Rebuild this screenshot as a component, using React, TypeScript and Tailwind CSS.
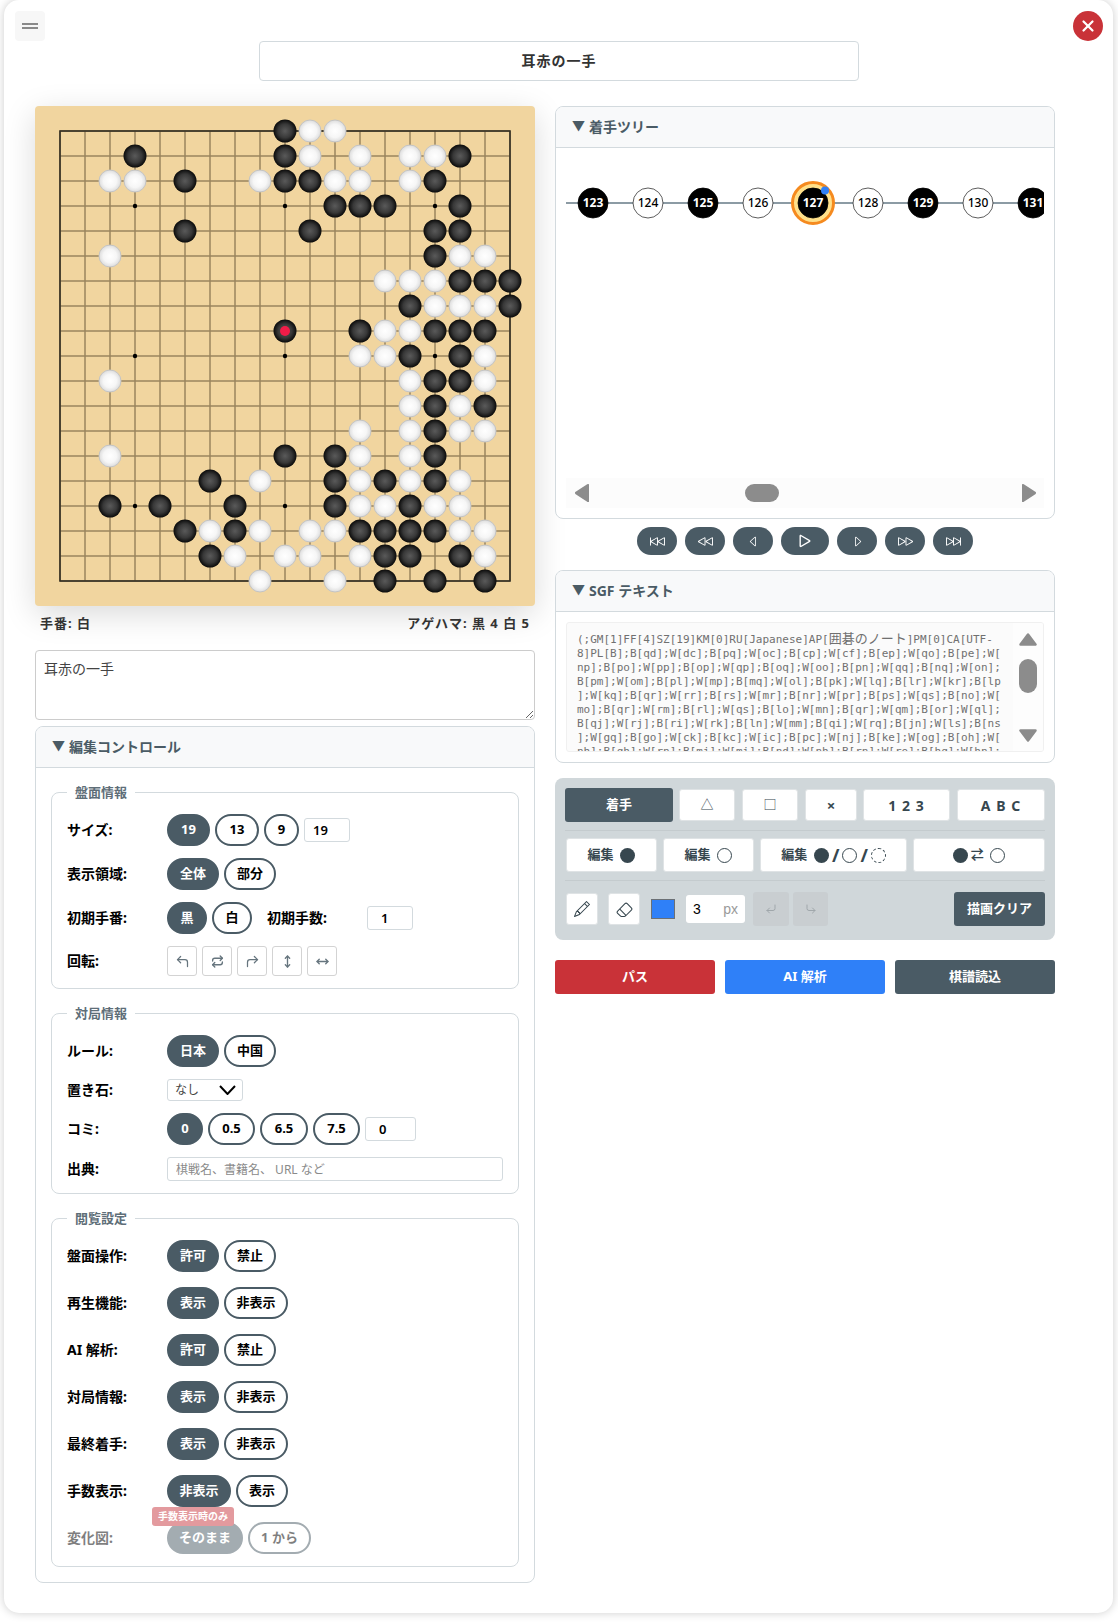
import React from 'react';
import { X, CornerUpLeft, CornerUpRight, Repeat, MoveVertical, MoveHorizontal, CornerDownLeft, CornerDownRight } from 'lucide-react';
import { BsSkipBackward, BsRewind, BsCaretLeft, BsPlay, BsCaretRight, BsFastForward, BsSkipForward, BsPencil, BsEraser } from 'react-icons/bs';

const BOARD = [
  '.........BWW.......',
  '...B.....BW.W.WWB..',
  '..WW.B..WBBWW.WB...',
  '...........BBB..B..',
  '.....B....B....BB..',
  '..W............BWW.',
  '.............WWWBBB',
  '..............BWWWB',
  '.........B..BWWBBB.',
  '............WWB.BW.',
  '..W...........WBBW.',
  '..............WBWB.',
  '............W.WBWW.',
  '..W......B.BW.WB...',
  '......B.W..BWBWBW..',
  '..B.B..B...BWWBWW..',
  '.....BWBW.WWBBBBWW.',
  '......BW.WW.WBB.BW.',
  '........W..W.B.B.B.',
];

const STARS = [3, 9, 15];
const SGF = [
  '(;GM[1]FF[4]SZ[19]KM[0]RU[Japanese]AP[',
  '8]PL[B];B[qd];W[dc];B[pq];W[oc];B[cp];W[cf];B[ep];W[qo];B[pe];W[',
  'np];B[po];W[pp];B[op];W[qp];B[oq];W[oo];B[pn];W[qq];B[nq];W[on];',
  'B[pm];W[om];B[pl];W[mp];B[mq];W[ol];B[pk];W[lq];B[lr];W[kr];B[lp',
  '];W[kq];B[qr];W[rr];B[rs];W[mr];B[nr];W[pr];B[ps];W[qs];B[no];W[',
  'mo];B[qr];W[rm];B[rl];W[qs];B[lo];W[mn];B[qr];W[qm];B[or];W[ql];',
  'B[qj];W[rj];B[ri];W[rk];B[ln];W[mm];B[qi];W[rq];B[jn];W[ls];B[ns',
  '];W[gq];B[go];W[ck];B[kc];W[ic];B[pc];W[nj];B[ke];W[og];B[oh];W[',
  'nh];B[qh];W[rn];B[mj];W[mi];B[nd];W[nh];B[rn];W[ro];B[hq];W[hn];',
];

function Board() {
  const lines = Array.from({ length: 19 }, (_, i) => 25 + i * 25);
  return (
    <svg width="500" height="500" viewBox="0 0 500 500" className="block">
      <defs>
        <radialGradient id="blackStone" cx="50%" cy="50%" r="50%">
          <stop offset="0%" stopColor="#5a5a5a" />
          <stop offset="60%" stopColor="#383838" />
          <stop offset="100%" stopColor="#0a0a0a" />
        </radialGradient>
        <radialGradient id="whiteStone" cx="50%" cy="50%" r="50%">
          <stop offset="0%" stopColor="#ffffff" />
          <stop offset="60%" stopColor="#f6f6f6" />
          <stop offset="100%" stopColor="#dcdcdc" />
        </radialGradient>
      </defs>
      {lines.map((p) => (
        <g key={p} stroke="#9a845e" strokeWidth="1.5">
          <line x1={p} y1="25" x2={p} y2="475" />
          <line x1="25" y1={p} x2="475" y2={p} />
        </g>
      ))}
      <rect x="25" y="25" width="450" height="450" fill="none" stroke="#332e22" strokeWidth="1.6" />
      {STARS.map((r) =>
        STARS.map((c) => <circle key={`${r}-${c}`} cx={25 + c * 25} cy={25 + r * 25} r="2.2" fill="#000" />),
      )}
      {BOARD.map((row, r) =>
        row.split('').map((cell, c) =>
          cell === '.' ? null : (
            <circle
              key={`s${r}-${c}`}
              cx={25 + c * 25}
              cy={25 + r * 25}
              r={cell === 'B' ? 11.5 : 11}
              fill={cell === 'B' ? 'url(#blackStone)' : 'url(#whiteStone)'}
              stroke={cell === 'B' ? 'none' : '#c4c4c4'}
              strokeWidth="1"
            />
          ),
        ),
      )}
      <circle cx={250} cy={225} r="5" fill="#f01c48" />
    </svg>
  );
}

function Panel({ title, children, className = '' }: { title: string; children: React.ReactNode; className?: string }) {
  return (
    <div className={`border border-[#d3dade] rounded-[8px] bg-white overflow-hidden flex flex-col ${className}`}>
      <div className="h-[41px] shrink-0 pb-[2px] bg-[#f8f9fa] border-b border-[#d3dade] flex items-center pl-[16px] text-[14px] font-bold text-[#4a5b65]">
        <span className="text-[13px] mr-[4px]">▼</span>
        {title}
      </div>
      {children}
    </div>
  );
}

function Pill({ children, active, w }: { children: React.ReactNode; active?: boolean; w: string }) {
  return (
    <div
      className={`h-[32px] rounded-full border-2 border-[#4a5b65] flex items-center justify-center text-[13px] font-bold ${w} ${
        active ? 'bg-[#4a5b65] text-white' : 'bg-white text-black'
      }`}
    >
      {children}
    </div>
  );
}

function Row({ label, children, className = '' }: { label: string; children: React.ReactNode; className?: string }) {
  return (
    <div className={`flex items-center ${className}`}>
      <div className="w-[100px] shrink-0 pb-[1px] text-[14px] font-bold text-black">{label}</div>
      <div className="flex items-center gap-[5px]">{children}</div>
    </div>
  );
}

function Group({ title, children, gap, top }: { title: string; children: React.ReactNode; gap: string; top: string }) {
  return (
    <fieldset className={`border border-[#d3dade] rounded-[8px] px-[15px] pt-[13px] pb-[12px] ${top}`}>
      <legend className="px-[8px] h-[18px] leading-[18px] text-[13px] font-bold text-[#5e6e78]">{title}</legend>
      <div className={`flex flex-col ${gap}`}>{children}</div>
    </fieldset>
  );
}

function TextBox({ value, w, pad }: { value: string; w: string; pad: string }) {
  return (
    <input
      readOnly
      value={value}
      className={`h-[24px] ${w} ${pad} border border-[#d3dade] rounded-[3px] text-[13px] font-semibold text-black outline-none`}
    />
  );
}

function RotateButton({ children }: { children: React.ReactNode }) {
  return (
    <div className="w-[30px] h-[30px] border border-[#d3d3d3] rounded-[3px] flex items-center justify-center text-[#66757e]">
      {children}
    </div>
  );
}

function Tool({ children, w, active }: { children: React.ReactNode; w: string; active?: boolean }) {
  return (
    <div
      className={`${w} flex items-center justify-center rounded-[3px] text-[13px] font-bold ${
        active ? 'h-[34px] bg-[#4a5b65] text-white' : 'h-[32px] bg-white text-[#37474f] border border-[#dfe3e5]'
      }`}
    >
      {children}
    </div>
  );
}

function Dot({ kind }: { kind: 'b' | 'w' | 'd' }) {
  if (kind === 'b') return <span className="inline-block w-[15px] h-[15px] rounded-full bg-[#37474f]" />;
  if (kind === 'w') return <span className="inline-block w-[15px] h-[15px] rounded-full bg-white border border-[#37474f]" />;
  return <span className="inline-block w-[15px] h-[15px] rounded-full bg-white border border-dashed border-[#37474f]" />;
}

const TREE = [123, 124, 125, 126, 127, 128, 129, 130, 131];

function MoveTree() {
  return (
    <svg width="478" height="120" className="block">
      <line x1="0" y1="45" x2="478" y2="45" stroke="#8c9ba4" strokeWidth="2" />
      {TREE.map((n, i) => {
        const x = 27 + i * 55;
        const black = n % 2 === 1;
        return (
          <g key={n}>
            {n === 127 && <circle cx={x} cy="45" r="20.5" fill="#ffe08a" stroke="#f58a1f" strokeWidth="3" />}
            <circle cx={x} cy="45" r="15" fill={black ? '#000' : '#fff'} stroke={black ? '#000' : '#333'} strokeWidth="0.8" />
            <text x={x} y="49" textAnchor="middle" fontSize="12" fontWeight={black ? 700 : 500} fill={black ? '#fff' : '#000'}>
              {n}
            </text>
            {n === 127 && <circle cx={x + 12} cy="32.5" r="4" fill="#2f80f8" />}
          </g>
        );
      })}
    </svg>
  );
}

function PlayButton({ children, wide }: { children: React.ReactNode; wide?: boolean }) {
  return (
    <div className={`${wide ? 'w-[48px]' : 'w-[40px]'} h-[28px] rounded-full bg-[#4a5b65] text-white flex items-center justify-center`}>
      {children}
    </div>
  );
}

export default function App() {
  return (
    <div className="w-[1118px] h-[1622px] bg-white overflow-hidden font-['Noto_Sans','Noto_Sans_CJK_JP',sans-serif]">
      <div className="relative ml-[4px] w-[1109px] h-[1613px] bg-white rounded-[15px] shadow-[0_0_10px_rgba(0,0,0,0.2)] pt-[41px] pl-[31px]">
        <div className="absolute left-[11px] top-[11px] w-[30px] h-[30px] rounded-[4px] bg-[#f7f7f7] flex flex-col items-center justify-center gap-[2px]">
          <span className="block w-[16px] h-[2px] bg-[#8a8a8a]" />
          <span className="block w-[16px] h-[2px] bg-[#8a8a8a]" />
        </div>
        <div className="absolute left-[1069px] top-[11px] w-[30px] h-[30px] rounded-full bg-[#c93238] flex items-center justify-center text-white">
          <X size={18} strokeWidth={3} />
        </div>

        <div className="w-[600px] h-[40px] ml-[224px] pb-[2px] border border-[#d3dade] rounded-[4px] flex items-center justify-center text-[14px] tracking-[1px] font-bold text-[#333]">
          耳赤の一手
        </div>

        <div className="flex gap-[20px] mt-[25px]">
          {/* left column */}
          <div className="w-[500px] shrink-0">
            <div className="w-[500px] h-[500px] bg-[#f1d59f] rounded-[4px] shadow-[0_8px_32px_rgba(0,0,0,0.15)]">
              <Board />
            </div>
            <div className="mt-[8px] h-[20px] px-[5px] flex items-center justify-between text-[13px] tracking-[1px] font-bold text-[#333]">
              <span>手番: 白</span>
              <span>アゲハマ: 黒 4 白 5</span>
            </div>
            <textarea
              readOnly
              defaultValue="耳赤の一手"
              className="block mt-[16px] w-[500px] h-[70px] border border-[#cccccc] rounded-[4px] px-[8px] py-[7px] text-[14px] text-[#444] outline-none resize-y"
            />
            <Panel title="編集コントロール" className="mt-[6px]">
              <div className="px-[15px] pb-[15px]">
                <Group title="盤面情報" gap="gap-[12px]" top="mt-[15px]">
                  <Row label="サイズ:">
                    <Pill active w="w-[43px]">19</Pill>
                    <Pill w="w-[44px]">13</Pill>
                    <Pill w="w-[35px]">9</Pill>
                    <TextBox value="19" w="w-[46px]" pad="pl-[8px]" />
                  </Row>
                  <Row label="表示領域:">
                    <Pill active w="w-[52px]">全体</Pill>
                    <Pill w="w-[52px]">部分</Pill>
                  </Row>
                  <Row label="初期手番:">
                    <Pill active w="w-[40px]">黒</Pill>
                    <Pill w="w-[40px]">白</Pill>
                    <div className="w-[95px] ml-[10px] pb-[1px] text-[14px] font-bold text-black">初期手数:</div>
                    <TextBox value="1" w="w-[46px]" pad="pl-[13px]" />
                  </Row>
                  <Row label="回転:">
                    <RotateButton><CornerUpLeft size={15} /></RotateButton>
                    <RotateButton><Repeat size={13} strokeWidth={2.5} /></RotateButton>
                    <RotateButton><CornerUpRight size={15} /></RotateButton>
                    <RotateButton><MoveVertical size={13} strokeWidth={2.5} /></RotateButton>
                    <RotateButton><MoveHorizontal size={13} strokeWidth={2.5} /></RotateButton>
                  </Row>
                </Group>

                <Group title="対局情報" gap="gap-[12px]" top="mt-[15px]">
                  <Row label="ルール:">
                    <Pill active w="w-[52px]">日本</Pill>
                    <Pill w="w-[52px]">中国</Pill>
                  </Row>
                  <Row label="置き石:">
                    <div className="w-[76px] h-[22px] border border-[#d3dade] rounded-[3px] flex items-center justify-between pl-[7px] pr-[6px] text-[12px] text-[#444]">
                      なし
                      <svg width="17" height="10" viewBox="0 0 17 10"><path d="M1 1 L8.5 9 L16 1" fill="none" stroke="#000" strokeWidth="2" /></svg>
                    </div>
                  </Row>
                  <Row label="コミ:">
                    <Pill active w="w-[36px]">0</Pill>
                    <Pill w="w-[47px]">0.5</Pill>
                    <Pill w="w-[48px]">6.5</Pill>
                    <Pill w="w-[47px]">7.5</Pill>
                    <TextBox value="0" w="w-[51px]" pad="pl-[13px]" />
                  </Row>
                  <Row label="出典:">
                    <input
                      readOnly
                      placeholder="棋戦名、書籍名、 URL など"
                      className="w-[336px] h-[24px] border border-[#d3dade] rounded-[3px] px-[8px] text-[12px] outline-none placeholder:text-[#8a8a8a]"
                    />
                  </Row>
                </Group>

                <Group title="閲覧設定" gap="gap-[15px]" top="mt-[15px]">
                  <Row label="盤面操作:">
                    <Pill active w="w-[52px]">許可</Pill>
                    <Pill w="w-[52px]">禁止</Pill>
                  </Row>
                  <Row label="再生機能:">
                    <Pill active w="w-[52px]">表示</Pill>
                    <Pill w="w-[64px]">非表示</Pill>
                  </Row>
                  <Row label="AI 解析:">
                    <Pill active w="w-[52px]">許可</Pill>
                    <Pill w="w-[52px]">禁止</Pill>
                  </Row>
                  <Row label="対局情報:">
                    <Pill active w="w-[52px]">表示</Pill>
                    <Pill w="w-[64px]">非表示</Pill>
                  </Row>
                  <Row label="最終着手:">
                    <Pill active w="w-[52px]">表示</Pill>
                    <Pill w="w-[64px]">非表示</Pill>
                  </Row>
                  <Row label="手数表示:">
                    <Pill active w="w-[64px]">非表示</Pill>
                    <Pill w="w-[52px]">表示</Pill>
                  </Row>
                  <div className="relative">
                    <Row label="変化図:" className="opacity-50">
                      <Pill active w="w-[76px]">そのまま</Pill>
                      <Pill w="w-[63px]">1 から</Pill>
                    </Row>
                    <div className="absolute left-[85px] top-[-15px] w-[82px] h-[19px] rounded-[3px] bg-[#e39a9e] text-white text-[10px] font-bold flex items-center justify-center">
                      手数表示時のみ
                    </div>
                  </div>
                </Group>
              </div>
            </Panel>
          </div>

          {/* right column */}
          <div className="w-[500px] shrink-0">
            <Panel title="着手ツリー" className="h-[413px]">
              <div className="flex-1 px-[10px] pb-[10px] flex flex-col">
                <div className="flex-1 pt-[10px] overflow-hidden">
                  <MoveTree />
                </div>
                <div className="h-[30px] w-[478px] bg-[#fcfcfc] flex items-center pl-[9px] pr-[8px]">
                  <svg width="14" height="18" viewBox="0 0 14 18"><path d="M13 1.5 L1.5 9 L13 16.5 Z" fill="#8c8c8c" stroke="#8c8c8c" strokeWidth="3" strokeLinejoin="round" /></svg>
                  <div className="w-[34px] h-[18px] rounded-full bg-[#8c8c8c] ml-[156px]" />
                  <div className="flex-1" />
                  <svg width="14" height="18" viewBox="0 0 14 18"><path d="M1 1.5 L12.5 9 L1 16.5 Z" fill="#8c8c8c" stroke="#8c8c8c" strokeWidth="3" strokeLinejoin="round" /></svg>
                </div>
              </div>
            </Panel>

            <div className="mt-[8px] flex justify-center gap-[8px]">
              <PlayButton><BsSkipBackward size={15} /></PlayButton>
              <PlayButton><BsRewind size={15} /></PlayButton>
              <PlayButton><BsCaretLeft size={13} /></PlayButton>
              <PlayButton wide><BsPlay size={22} /></PlayButton>
              <PlayButton><BsCaretRight size={13} /></PlayButton>
              <PlayButton><BsFastForward size={15} /></PlayButton>
              <PlayButton><BsSkipForward size={15} /></PlayButton>
            </div>

            <Panel title="SGF テキスト" className="mt-[15px] h-[193px]">
              <div className="mx-[10px] mt-[10px] h-[130px] w-[478px] flex border border-[#f0f0f0] rounded-[3px] bg-[#fbfbfb] overflow-hidden">
                <div className="flex-1 pt-[10px] pl-[10px] font-['DejaVu_Sans_Mono','Noto_Sans_CJK_JP',monospace] text-[11px] leading-[14px] text-[#707070] whitespace-pre overflow-hidden">
                  {SGF.map((line, i) => (
                    <div key={i} className="h-[14px]">
                      {line}
                      {i === 0 && (
                        <>
                          <span className="text-[13px] leading-[0px]">囲碁のノート</span>
                          ]PM[0]CA[UTF-
                        </>
                      )}
                    </div>
                  ))}
                </div>
                <div className="w-[30px] shrink-0 bg-[#fdfdfd] flex flex-col items-center pt-[10px]">
                  <svg width="18" height="13" viewBox="0 0 18 13"><path d="M9 1.5 L16.5 11.5 L1.5 11.5 Z" fill="#8c8c8c" stroke="#8c8c8c" strokeWidth="2.5" strokeLinejoin="round" /></svg>
                  <div className="w-[18px] h-[34px] mt-[13px] rounded-full bg-[#8c8c8c]" />
                  <svg width="18" height="13" viewBox="0 0 18 13" className="mt-[36px]"><path d="M1.5 1.5 L16.5 1.5 L9 11.5 Z" fill="#8c8c8c" stroke="#8c8c8c" strokeWidth="2.5" strokeLinejoin="round" /></svg>
                </div>
              </div>
            </Panel>

            <div className="mt-[15px] h-[162px] rounded-[8px] bg-[#d0d7da] px-[10px] pt-[10px]">
              <div className="flex items-center h-[34px]">
                <Tool active w="w-[109px]">着手</Tool>
                <div className="ml-[6px]"><Tool w="w-[56px]"><span className="text-[13px] font-normal">△</span></Tool></div>
                <div className="ml-[7px]"><Tool w="w-[56px]"><span className="text-[13px] font-normal">□</span></Tool></div>
                <div className="ml-[7px]"><Tool w="w-[52px]"><span className="text-[15px]">×</span></Tool></div>
                <div className="ml-[6px]"><Tool w="w-[87px]"><span className="text-[14px] tracking-[1px]">1 2 3</span></Tool></div>
                <div className="ml-[7px]"><Tool w="w-[88px]"><span className="text-[14px] tracking-[1px]">A B C</span></Tool></div>
              </div>
              <div className="h-px bg-[#c4cbce] mt-[8px]" />
              <div className="flex items-center gap-[6px] mt-[7px] pl-[1px]">
                <div className="contents [&>div]:h-[34px]">
                  <Tool w="w-[91px]">編集&nbsp;&nbsp;<Dot kind="b" /></Tool>
                  <Tool w="w-[91px]">編集&nbsp;&nbsp;<Dot kind="w" /></Tool>
                  <Tool w="w-[147px]">編集&nbsp;&nbsp;<Dot kind="b" /><span className="text-[18px] mx-[3px]">/</span><Dot kind="w" /><span className="text-[18px] mx-[3px]">/</span><Dot kind="d" /></Tool>
                  <Tool w="w-[132px]"><Dot kind="b" /><span className="mx-[3px] text-[13px]">⇄</span>&nbsp;<Dot kind="w" /></Tool>
                </div>
              </div>
              <div className="h-px bg-[#c4cbce] mt-[8px]" />
              <div className="flex items-center mt-[11px] pl-[1px] h-[34px]">
                <Tool w="w-[32px]"><BsPencil size={16} /></Tool>
                <div className="ml-[10px]"><Tool w="w-[32px]"><BsEraser size={17} /></Tool></div>
                <div className="ml-[11px] w-[24px] h-[20px] bg-[#2f80f8] border border-[#6b7075]" />
                <div className="ml-[11px] w-[59px] h-[28px] bg-white rounded-[3px] flex items-center justify-between px-[7px] text-[14px] text-black font-['Liberation_Sans',sans-serif]">
                  3<span className="text-[#9a9a9a]">px</span>
                </div>
                <div className="ml-[8px] w-[36px] h-[34px] rounded-[3px] bg-[#c9ced1] flex items-center justify-center text-[#a0a7ab]">
                  <CornerDownLeft size={12} />
                </div>
                <div className="ml-[4px] w-[35px] h-[34px] rounded-[3px] bg-[#c9ced1] flex items-center justify-center text-[#a0a7ab]">
                  <CornerDownRight size={12} />
                </div>
                <div className="ml-auto w-[91px] h-[34px] rounded-[3px] bg-[#4a5b65] text-white text-[13px] font-bold flex items-center justify-center">
                  描画クリア
                </div>
              </div>
            </div>

            <div className="mt-[20px] flex gap-[10px] text-white text-[13px] font-bold">
              <div className="flex-1 h-[34px] rounded-[3px] bg-[#c93238] flex items-center justify-center">パス</div>
              <div className="flex-1 h-[34px] rounded-[3px] bg-[#2f80f8] flex items-center justify-center">AI 解析</div>
              <div className="flex-1 h-[34px] rounded-[3px] bg-[#4a5b65] flex items-center justify-center">棋譜読込</div>
            </div>
          </div>
        </div>
      </div>
    </div>
  );
}
